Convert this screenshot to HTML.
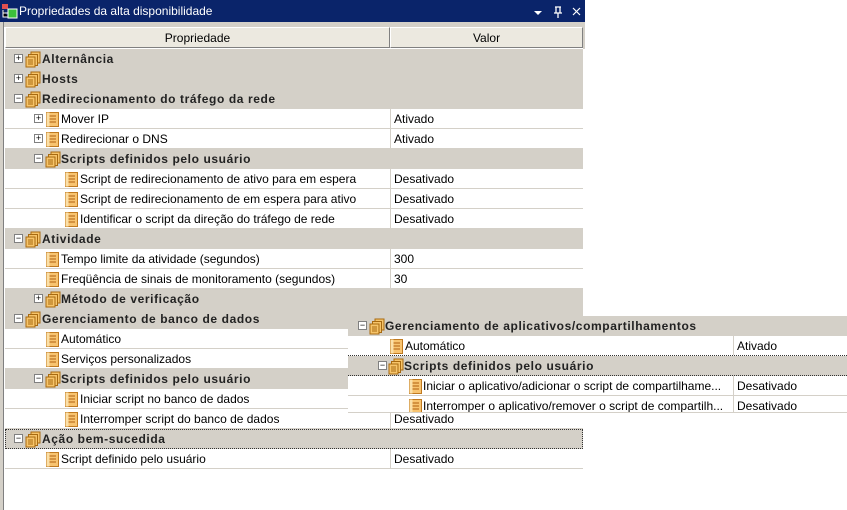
<!DOCTYPE html>
<html><head><meta charset="utf-8"><style>
*{margin:0;padding:0;box-sizing:border-box}
body{width:847px;height:510px;background:#fff;position:relative;overflow:hidden;font-family:"Liberation Sans",Tahoma,sans-serif;font-size:12px;color:#000}
.a{position:absolute}
.title{left:0;top:0;width:585px;height:22px;background:#0a246a;color:#fff;font-size:12px;line-height:22px;padding-left:19px}
.r{position:absolute;height:20px;line-height:21px;white-space:nowrap;overflow:hidden}
.g{background:#d4d0c8;font-weight:bold;letter-spacing:0.6px;color:#222}
.w{background:#fff;border-bottom:1px solid #d4d0c8}
.t{position:absolute;top:0}
.v{position:absolute;top:0;border-left:1px solid #d4d0c8;padding-left:3px;height:20px}
.ex{position:absolute;top:5px;width:9px;height:9px;border:1px solid #808080;background:#fff;font-size:9px;line-height:7px;text-align:center;font-weight:normal;letter-spacing:0;color:#000}
.ic{position:absolute;top:2px}
</style></head><body>
<svg width="0" height="0" style="position:absolute"><defs>
<g id="grp"><rect x="6" y="1" width="9" height="11" fill="#f6c46a" stroke="#a86a10"/><rect x="3.5" y="3.5" width="9" height="11" fill="#f6c46a" stroke="#a86a10"/><rect x="1" y="6" width="9" height="10" fill="#f6c46a" stroke="#a86a10"/><path d="M3 9h5M3 11h5M3 13h5" stroke="#a86a10"/></g>
<g id="lf"><rect x="1.5" y="1.5" width="12" height="14" fill="#f8c470" stroke="#c07a20"/><path d="M4 5h7M4 8h7M4 11h7" stroke="#b06010"/><rect x="1.5" y="1.5" width="3" height="14" fill="#fbe0a8"/></g>
</defs></svg>
<div class="a title">Propriedades da alta disponibilidade</div>
<svg class="a" style="left:2px;top:4px" width="16" height="15"><rect x="0" y="0" width="6" height="5" fill="#e05050"/><rect x="6" y="5" width="9" height="9" fill="#3bbf3b" stroke="#fff"/><path d="M1 6v7h5M1 9h5" stroke="#fff"/></svg>
<svg class="a" style="left:530px;top:5px" width="55" height="14"><path d="M4 6h8l-4 4z" fill="#fff"/><path d="M25 2h6M26 2v6M30 2v6M24 8h8M28 8v5" stroke="#fff" stroke-width="1.3" fill="none"/><path d="M43 3l7 7M50 3l-7 7" stroke="#fff" stroke-width="1.2"/></svg>
<div class="a" style="left:0;top:22px;width:585px;height:5px;background:#d4d0c8"></div>
<div class="a" style="left:0;top:22px;width:4px;height:488px;background:#d4d0c8;border-right:1px solid #808080"></div>
<div class="a" style="left:5px;top:27px;width:385px;height:21px;background:#ece9e0;border:1px solid #fff;border-right-color:#808080;border-bottom-color:#808080;text-align:center;line-height:20px">Propriedade</div>
<div class="a" style="left:390px;top:27px;width:193px;height:21px;background:#ece9e0;border:1px solid #fff;border-right-color:#808080;border-bottom-color:#808080;text-align:center;line-height:20px">Valor</div>
<div class="a" style="left:583px;top:27px;width:2px;height:22px;background:#d4d0c8"></div>

<div class="r g" style="left:5px;top:49px;width:578px"><div class="ex" style="left:9px">+</div><svg class="ic" style="left:20px" width="16" height="17"><use href="#grp"/></svg><span class="t" style="left:37px">Alternância</span></div>
<div class="r g" style="left:5px;top:69px;width:578px"><div class="ex" style="left:9px">+</div><svg class="ic" style="left:20px" width="16" height="17"><use href="#grp"/></svg><span class="t" style="left:37px">Hosts</span></div>
<div class="r g" style="left:5px;top:89px;width:578px"><div class="ex" style="left:9px">−</div><svg class="ic" style="left:20px" width="16" height="17"><use href="#grp"/></svg><span class="t" style="left:37px">Redirecionamento do tráfego da rede</span></div>
<div class="r w" style="left:5px;top:109px;width:578px"><div class="ex" style="left:29px">+</div><svg class="ic" style="left:40px" width="16" height="17"><use href="#lf"/></svg><span class="t" style="left:56px">Mover IP</span><span class="v" style="left:385px">Ativado</span></div>
<div class="r w" style="left:5px;top:129px;width:578px"><div class="ex" style="left:29px">+</div><svg class="ic" style="left:40px" width="16" height="17"><use href="#lf"/></svg><span class="t" style="left:56px">Redirecionar o DNS</span><span class="v" style="left:385px">Ativado</span></div>
<div class="r g" style="left:5px;top:149px;width:578px"><div class="ex" style="left:29px">−</div><svg class="ic" style="left:40px" width="16" height="17"><use href="#grp"/></svg><span class="t" style="left:56px">Scripts definidos pelo usuário</span></div>
<div class="r w" style="left:5px;top:169px;width:578px"><svg class="ic" style="left:59px" width="16" height="17"><use href="#lf"/></svg><span class="t" style="left:75px">Script de redirecionamento de ativo para em espera</span><span class="v" style="left:385px">Desativado</span></div>
<div class="r w" style="left:5px;top:189px;width:578px"><svg class="ic" style="left:59px" width="16" height="17"><use href="#lf"/></svg><span class="t" style="left:75px">Script de redirecionamento de em espera para ativo</span><span class="v" style="left:385px">Desativado</span></div>
<div class="r w" style="left:5px;top:209px;width:578px"><svg class="ic" style="left:59px" width="16" height="17"><use href="#lf"/></svg><span class="t" style="left:75px">Identificar o script da direção do tráfego de rede</span><span class="v" style="left:385px">Desativado</span></div>
<div class="r g" style="left:5px;top:229px;width:578px"><div class="ex" style="left:9px">−</div><svg class="ic" style="left:20px" width="16" height="17"><use href="#grp"/></svg><span class="t" style="left:37px">Atividade</span></div>
<div class="r w" style="left:5px;top:249px;width:578px"><svg class="ic" style="left:40px" width="16" height="17"><use href="#lf"/></svg><span class="t" style="left:56px">Tempo limite da atividade (segundos)</span><span class="v" style="left:385px">300</span></div>
<div class="r w" style="left:5px;top:269px;width:578px"><svg class="ic" style="left:40px" width="16" height="17"><use href="#lf"/></svg><span class="t" style="left:56px">Freqüência de sinais de monitoramento (segundos)</span><span class="v" style="left:385px">30</span></div>
<div class="r g" style="left:5px;top:289px;width:578px"><div class="ex" style="left:29px">+</div><svg class="ic" style="left:40px" width="16" height="17"><use href="#grp"/></svg><span class="t" style="left:56px">Método de verificação</span></div>
<div class="r g" style="left:5px;top:309px;width:578px"><div class="ex" style="left:9px">−</div><svg class="ic" style="left:20px" width="16" height="17"><use href="#grp"/></svg><span class="t" style="left:37px">Gerenciamento de banco de dados</span></div>
<div class="r w" style="left:5px;top:329px;width:578px"><svg class="ic" style="left:40px" width="16" height="17"><use href="#lf"/></svg><span class="t" style="left:56px">Automático</span></div>
<div class="r w" style="left:5px;top:349px;width:578px"><svg class="ic" style="left:40px" width="16" height="17"><use href="#lf"/></svg><span class="t" style="left:56px">Serviços personalizados</span></div>
<div class="r g" style="left:5px;top:369px;width:578px"><div class="ex" style="left:29px">−</div><svg class="ic" style="left:40px" width="16" height="17"><use href="#grp"/></svg><span class="t" style="left:56px">Scripts definidos pelo usuário</span></div>
<div class="r w" style="left:5px;top:389px;width:578px"><svg class="ic" style="left:59px" width="16" height="17"><use href="#lf"/></svg><span class="t" style="left:75px">Iniciar script no banco de dados</span></div>
<div class="r w" style="left:5px;top:409px;width:578px"><svg class="ic" style="left:59px" width="16" height="17"><use href="#lf"/></svg><span class="t" style="left:75px">Interromper script do banco de dados</span><span class="v" style="left:385px">Desativado</span></div>
<div class="r g" style="left:5px;top:429px;width:578px;border:1px dotted #333"><div class="ex" style="left:8px;top:4px">−</div><svg class="ic" style="left:19px;top:1px" width="16" height="17"><use href="#grp"/></svg><span class="t" style="left:36px;top:-1px">Ação bem-sucedida</span></div>
<div class="r w" style="left:5px;top:449px;width:578px"><svg class="ic" style="left:40px" width="16" height="17"><use href="#lf"/></svg><span class="t" style="left:56px">Script definido pelo usuário</span><span class="v" style="left:385px">Desativado</span></div>

<div class="a" style="left:583px;top:309px;width:264px;height:7px;background:#fff"></div>
<div class="r g" style="left:348px;top:316px;width:499px"><div class="ex" style="left:10px">−</div><svg class="ic" style="left:21px" width="16" height="17"><use href="#grp"/></svg><span class="t" style="left:37px">Gerenciamento de aplicativos/compartilhamentos</span></div>
<div class="r w" style="left:348px;top:336px;width:499px;border-bottom:1px dotted #333"><svg class="ic" style="left:41px" width="16" height="17"><use href="#lf"/></svg><span class="t" style="left:57px">Automático</span><span class="v" style="left:385px">Ativado</span></div>
<div class="r g" style="left:348px;top:356px;width:499px;border-bottom:1px dotted #333"><div class="ex" style="left:30px">−</div><svg class="ic" style="left:40px" width="16" height="17"><use href="#grp"/></svg><span class="t" style="left:56px">Scripts definidos pelo usuário</span></div>
<div class="r w" style="left:348px;top:376px;width:499px"><svg class="ic" style="left:60px" width="16" height="17"><use href="#lf"/></svg><span class="t" style="left:75px;width:308px;overflow:hidden">Iniciar o aplicativo/adicionar o script de compartilhame...</span><span class="v" style="left:385px">Desativado</span></div>
<div class="r w" style="left:348px;top:396px;width:499px;height:17px"><svg class="ic" style="left:60px" width="16" height="17"><use href="#lf"/></svg><span class="t" style="left:75px;width:308px;overflow:hidden">Interromper o aplicativo/remover o script de compartilh...</span><span class="v" style="left:385px">Desativado</span></div>
</body></html>
